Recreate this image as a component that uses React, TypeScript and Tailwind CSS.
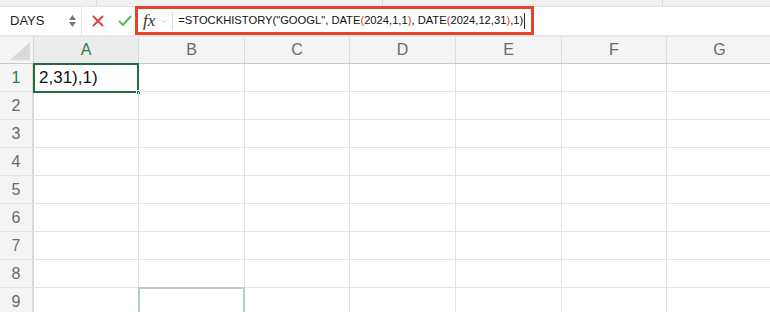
import { ChevronDown } from 'lucide-react'

const cols = [
  { name: 'A', w: 'w-[105px]' },
  { name: 'B', w: 'w-[106px]' },
  { name: 'C', w: 'w-[105px]' },
  { name: 'D', w: 'w-[106px]' },
  { name: 'E', w: 'w-[106px]' },
  { name: 'F', w: 'w-[105px]' },
  { name: 'G', w: 'w-[106px]' },
]

const rows = [1, 2, 3, 4, 5, 6, 7, 8, 9]

function Paren({ c }: { c: string }) {
  return <span className="text-[#d33b2c]">{c}</span>
}

function FormulaBar() {
  return (
    <div className="flex h-[28px] bg-white items-stretch">
      <div className="w-[82px] flex items-center justify-between pl-[10px] pr-[5px] border-r border-[#e2e2e2]">
        <span className="text-[13px] text-[#222]">DAYS</span>
        <div className="flex flex-col items-center gap-[2px]">
          <svg width="7" height="5" viewBox="0 0 7 5"><path d="M3.5 0L7 5H0z" fill="#7a7a7a" /></svg>
          <svg width="7" height="5" viewBox="0 0 7 5"><path d="M0 0h7L3.5 5z" fill="#7a7a7a" /></svg>
        </div>
      </div>
      <div className="w-[53px] flex items-center pl-[10px] gap-[14px]">
        <svg width="12" height="12" viewBox="0 0 12 12">
          <path d="M1.5 1.5L10.5 10.5M10.5 1.5L1.5 10.5" stroke="#d9463b" strokeWidth="2" strokeLinecap="round" />
        </svg>
        <svg width="14" height="12" viewBox="0 0 14 12">
          <path d="M1.5 6.5L5 10L12.5 1.5" stroke="#5cb85c" strokeWidth="2" fill="none" strokeLinecap="round" strokeLinejoin="round" />
        </svg>
      </div>
      <div className="w-[399px] -mt-px h-[29px] border-[3px] border-[#e8432a] flex items-center overflow-hidden">
        <span className="ml-[5px] text-[17px] italic text-[#333]" style={{ fontFamily: '"Liberation Serif", serif' }}>
          fx
        </span>
        <ChevronDown className="ml-[4px] h-[10px] w-[10px] text-[#b0b0b0]" strokeWidth={1.5} />
        <div className="ml-[3px] h-[18px] w-px bg-[#dcdcdc]" />
        <span className="ml-[5px] text-[11.2px] text-[#111] whitespace-nowrap">
          =STOCKHISTORY("GOOGL", DATE<Paren c="(" />2024,1,1<Paren c=")" />, DATE<Paren c="(" />2024,12,31
          <Paren c=")" />,1)
        </span>
        <div className="ml-[1px] h-[16px] w-px bg-[#222]" />
      </div>
      <div className="flex-1 bg-white" />
    </div>
  )
}

export default function App() {
  return (
    <div
      className="w-[770px] h-[312px] overflow-hidden bg-white"
      style={{ fontFamily: '"Liberation Sans", Arial, sans-serif' }}
    >
      <div className="h-[7px] bg-[#f1f1f1] flex border-b border-[#e4e4e4]">
        <div className="w-[97px] border-r border-[#dedede]" />
        <div className="w-[286px] border-r border-[#dedede]" />
        <div className="w-[280px] border-r border-[#dedede]" />
      </div>
      <FormulaBar />
      <div className="h-[2px] bg-[#e6e6e6]" />
      <div className="flex h-[27px] bg-[#f4f4f4] border-b border-[#c9c9c9]">
        <div className="w-[34px] shrink-0 border-r border-[#d4d4d4] relative">
          <svg className="absolute right-[3px] bottom-[3px]" width="20" height="18" viewBox="0 0 20 18">
            <path d="M20 0V18H0z" fill="#dadada" />
          </svg>
        </div>
        {cols.map((c) => (
          <div
            key={c.name}
            className={`${c.w} shrink-0 flex items-center justify-center border-r border-[#dcdcdc] text-[16px] ${
              c.name === 'A' ? 'text-[#2f7a46] bg-[#ececec]' : 'text-[#6a6a6a]'
            }`}
          >
            {c.name}
          </div>
        ))}
      </div>
      {rows.map((r) => (
        <div key={r} className="flex h-[28px]">
          <div
            className={`w-[34px] shrink-0 flex items-center justify-center bg-[#f4f4f4] border-r-2 border-[#dadada] border-b border-b-[#e4e4e4] text-[16px] ${
              r === 1 ? 'text-[#2f7a46] bg-[#ececec]' : 'text-[#6a6a6a]'
            }`}
          >
            {r}
          </div>
          {cols.map((c) => (
            <div key={c.name} className={`${c.w} shrink-0 border-r border-b border-[#e3e3e3] relative`}>
              {r === 1 && c.name === 'A' && (
                <div className="absolute -left-px -top-px -right-px -bottom-[2px] border-2 border-[#1f6e3f] flex items-center pl-[4px]">
                  <span className="text-[17px] text-[#111]">2,31),1)</span>
                  <div className="absolute -right-[4px] -bottom-[4px] w-[5px] h-[5px] bg-[#1f6e3f] border border-white" />
                </div>
              )}
              {r === 9 && c.name === 'B' && (
                <div className="absolute -left-px -top-px -right-px -bottom-px border-2 border-[#b9cdbd]" />
              )}
            </div>
          ))}
        </div>
      ))}
    </div>
  )
}
